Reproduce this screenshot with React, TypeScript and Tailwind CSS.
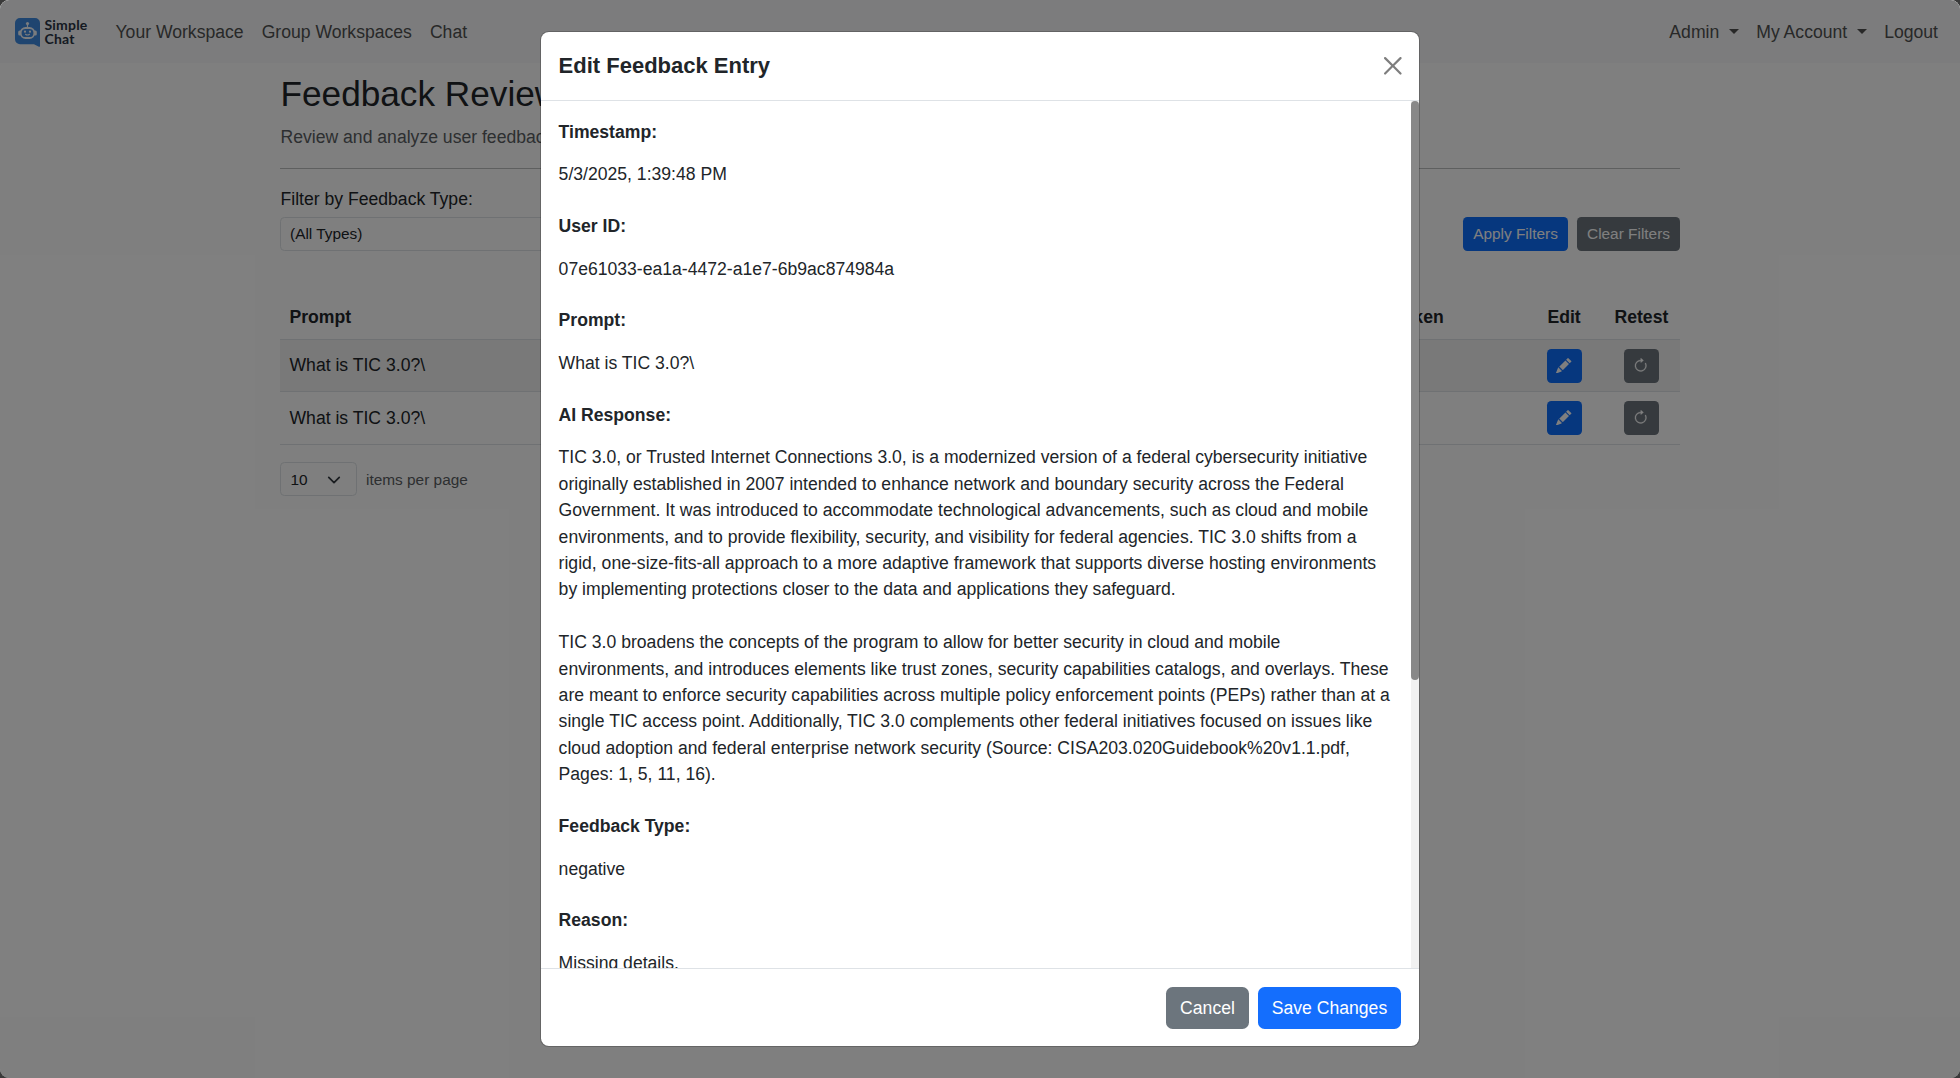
import type { ReactNode } from "react";

const fields: { label: string; value: string }[] = [
  { label: "Timestamp:", value: "5/3/2025, 1:39:48 PM" },
  { label: "User ID:", value: "07e61033-ea1a-4472-a1e7-6b9ac874984a" },
  { label: "Prompt:", value: "What is TIC 3.0?\\" },
  {
    label: "AI Response:",
    value:
      "TIC 3.0, or Trusted Internet Connections 3.0, is a modernized version of a federal cybersecurity initiative originally established in 2007 intended to enhance network and boundary security across the Federal Government. It was introduced to accommodate technological advancements, such as cloud and mobile environments, and to provide flexibility, security, and visibility for federal agencies. TIC 3.0 shifts from a rigid, one-size-fits-all approach to a more adaptive framework that supports diverse hosting environments by implementing protections closer to the data and applications they safeguard.\n\nTIC 3.0 broadens the concepts of the program to allow for better security in cloud and mobile environments, and introduces elements like trust zones, security capabilities catalogs, and overlays. These are meant to enforce security capabilities across multiple policy enforcement points (PEPs) rather than at a single TIC access point. Additionally, TIC 3.0 complements other federal initiatives focused on issues like cloud adoption and federal enterprise network security (Source: CISA203.020Guidebook%20v1.1.pdf, Pages: 1, 5, 11, 16).",
  },
  { label: "Feedback Type:", value: "negative" },
  { label: "Reason:", value: "Missing details." },
];

function Logo() {
  return (
    <div className="flex h-[33px] w-[74px] items-start gap-[4.500px]">
      <svg width="25" height="30" viewBox="0 0 25 30" className="mt-[3px] shrink-0">
        <path d="M5 0h15a5 5 0 0 1 5 5v23a.7.7 0 0 1-1.100.7L19 26.200H5a5 5 0 0 1-5-5V5a5 5 0 0 1 5-5z" fill="#3f8ae0" />
        <circle cx="12.500" cy="5.500" r="1.600" fill="#f4f8fd" />
        <path d="M12.500 5.500v4" stroke="#f4f8fd" strokeWidth="1.200" />
        <rect x="3.200" y="12.400" width="3" height="5" rx="1.500" fill="#f4f8fd" />
        <rect x="18.800" y="12.400" width="3" height="5" rx="1.500" fill="#f4f8fd" />
        <rect x="5.700" y="10" width="13.600" height="10" rx="4.800" fill="#3f8ae0" stroke="#f4f8fd" strokeWidth="1.800" />
        <circle cx="10" cy="13.700" r="1.100" fill="#f4f8fd" />
        <circle cx="15" cy="13.700" r="1.100" fill="#f4f8fd" />
        <path d="M10.500 16.300q2 1.500 4 0" stroke="#f4f8fd" strokeWidth="1.100" fill="none" strokeLinecap="round" />
      </svg>
      <div className="mt-[3px] font-['Lato'] text-[14px] leading-[13.500px] font-bold tracking-[0.200px] text-[#2b3445]">
        Simple
        <br />
        Chat
      </div>
    </div>
  );
}

function Caret() {
  return <span className="mb-[-1px] ml-[10px] inline-block border-x-[5px] border-t-[5px] border-x-transparent border-t-[#505151] align-[5px]" />;
}

function IconButton({ className, children }: { className: string; children: ReactNode }) {
  return <button className={`flex h-[34px] w-[35px] items-center justify-center rounded-[4.4px] text-white ${className}`}>{children}</button>;
}

function Pencil() {
  return (
    <svg width="15.400" height="15.400" viewBox="0 0 16 16" fill="currentColor" className="mr-[1px] mb-[1px]">
      <path d="M12.854.146a.5.5 0 0 0-.707 0L10.500 1.793 14.207 5.500l1.647-1.646a.5.5 0 0 0 0-.708zm.646 6.061L9.793 2.500 3.293 9H3.500a.5.5 0 0 1 .5.5v.5h.5a.5.5 0 0 1 .5.5v.5h.5a.5.5 0 0 1 .5.5v.5h.5a.5.5 0 0 1 .5.5v.207zm-7.468 7.468A.5.5 0 0 1 6 13.500V13h-.5a.5.5 0 0 1-.5-.5V12h-.5a.5.5 0 0 1-.5-.5V11h-.5a.5.5 0 0 1-.5-.5V10h-.5a.5.5 0 0 1-.175-.032l-.179.178a.5.5 0 0 0-.11.168l-2 5a.5.5 0 0 0 .65.65l5-2a.5.5 0 0 0 .168-.11z" />
    </svg>
  );
}

function Retest() {
  return (
    <svg width="15.400" height="15.400" viewBox="0 0 16 16" fill="currentColor" stroke="currentColor" strokeWidth="0.300" className="mr-[1px] mb-[1px]">
      <path fillRule="evenodd" d="M8 3a5 5 0 1 0 4.546 2.914.5.5 0 0 1 .908-.417A6 6 0 1 1 8 2z" />
      <path d="M8 4.466V.534a.25.25 0 0 1 .41-.192l2.360 1.966c.12.1.12.284 0 .384L8.410 4.658A.25.25 0 0 1 8 4.466" />
    </svg>
  );
}

function Row({ striped }: { striped: boolean }) {
  return (
    <div className={`flex items-start border-t border-[#dee2e6] ${striped ? "h-[52px] bg-[#f2f2f2]" : "h-[53px]"}`}>
      <div className={`flex-1 px-[9.500px] leading-[26.400px] ${striped ? "pt-[12px]" : "pt-[13px]"}`}>What is TIC 3.0?\</div>
      <div className="flex w-[133px] gap-[42px] pt-[9px]">
        <IconButton className="bg-[#0d6efd]">
          <Pencil />
        </IconButton>
        <IconButton className="bg-[#6c757d]">
          <Retest />
        </IconButton>
      </div>
    </div>
  );
}

function Page() {
  return (
    <div className="h-full bg-white">
      <nav className="flex h-[63px] items-center bg-[#f8f9fa] pr-[22px] pl-[15px] text-[#505151]">
        <Logo />
        <div className="mt-[2px] ml-[26.500px] flex gap-[18px]">
          <span>Your Workspace</span>
          <span>Group Workspaces</span>
          <span>Chat</span>
        </div>
        <div className="mt-[2px] ml-auto flex gap-[17px]">
          <span>
            Admin
            <Caret />
          </span>
          <span>
            My Account
            <Caret />
          </span>
          <span>Logout</span>
        </div>
      </nav>
      <main className="mx-auto w-[1400px]">
        <h2 className="pt-[10px] pl-[0.500px] text-[35.200px] leading-[42.200px]">Feedback Review</h2>
        <p className="mt-[9px] pl-[0.500px] text-[#5a5e62]">Review and analyze user feedback on AI responses.</p>
        <hr className="mt-[17px] border-t border-[#bdbebf]" />
        <div className="flex h-[82.200px] items-end justify-between">
          <div>
            <div className="mb-[4.500px] pl-[0.500px] leading-[26.400px]">Filter by Feedback Type:</div>
            <div className="h-[34px] w-[338px] rounded-[4.400px] border border-[#dee2e6] px-[9px] text-[15.400px] leading-[32px]">(All Types)</div>
          </div>
          <div className="flex gap-[9px] text-[15.400px] text-white">
            <button className="h-[34px] w-[105px] rounded-[4.400px] bg-[#0d6efd] pt-[1px]">Apply Filters</button>
            <button className="h-[34px] w-[103px] rounded-[4.400px] bg-[#6c757d] pt-[1px]">Clear Filters</button>
          </div>
        </div>
        <div className="mt-[43px] flex h-[45px] items-center px-[9.500px] pt-[2px] font-bold">
          <span className="flex-1">Prompt</span>
          <span className="w-[213px]">Action Taken</span>
          <span className="w-[67px]">Edit</span>
          <span className="w-[56px]">Retest</span>
        </div>
        <Row striped />
        <Row striped={false} />
        <div className="flex items-center border-t border-[#dee2e6] pt-[17.600px] text-[15.400px]">
          <div className="flex h-[34px] w-[77px] items-center justify-between rounded-[4.400px] border border-[#dee2e6] pt-[1px] pr-[15px] pl-[9.500px]">
            10
            <svg width="14" height="14" viewBox="0 0 16 16">
              <path fill="none" stroke="#343a40" strokeLinecap="round" strokeLinejoin="round" strokeWidth="2" d="m2 5 6 6 6-6" />
            </svg>
          </div>
          <span className="mt-[2px] ml-[9px] text-[#5a5e62]">items per page</span>
        </div>
      </main>
    </div>
  );
}

function EditModal() {
  return (
    <div className="flex h-[1016px] w-[880px] flex-col overflow-hidden rounded-[8.800px] border border-black/20 bg-white bg-clip-padding">
      <header className="flex h-[69px] shrink-0 items-center justify-between border-b border-[#dee2e6] pr-[17px] pl-[17.600px]">
        <h5 className="mb-[2px] text-[22px] leading-[33px] font-bold">Edit Feedback Entry</h5>
        <svg width="17.600" height="17.600" viewBox="0 0 16 16" className="opacity-50">
          <path d="M.293.293a1 1 0 0 1 1.414 0L8 6.586 14.293.293a1 1 0 1 1 1.414 1.414L9.414 8l6.293 6.293a1 1 0 0 1-1.414 1.414L8 9.414l-6.293 6.293a1 1 0 0 1-1.414-1.414L6.586 8 .293 1.707a1 1 0 0 1 0-1.414z" />
        </svg>
      </header>
      <div className="flex min-h-0 flex-1">
        <div className="flex-1 overflow-hidden px-[17.600px] pt-[17.600px]">
          {fields.map((f) => (
            <div key={f.label} className="mb-[17.600px]">
              <div className="mb-[8.600px] font-bold">{f.label}</div>
              <div className="pt-[7.600px] pb-[7.800px] whitespace-pre-wrap">{f.value}</div>
            </div>
          ))}
        </div>
        <div className="w-[8px] bg-[#f1f1f1]">
          <div className="h-[579px] rounded-[4px] bg-[#888888]" />
        </div>
      </div>
      <footer className="flex h-[78px] shrink-0 items-center justify-end gap-[9px] border-t border-[#dee2e6] pr-[18px] text-white">
        <button className="h-[42px] w-[83px] rounded-[6.600px] bg-[#6c757d] pt-[1px]">Cancel</button>
        <button className="h-[42px] w-[143px] rounded-[6.600px] bg-[#146efd] pt-[1px]">Save Changes</button>
      </footer>
    </div>
  );
}

export default function App() {
  return (
    <div className="relative h-[1078px] w-[1960px] overflow-hidden bg-[#3a3a3a] font-['Liberation_Sans',Arial,sans-serif] text-[17.600px] leading-[26.400px] text-[#212529]">
      <div className="h-full overflow-hidden rounded-[9px]">
        <Page />
      </div>
      <div className="absolute inset-0 flex items-start justify-center rounded-[9px] bg-black/50 pt-[31px]">
        <EditModal />
      </div>
    </div>
  );
}
